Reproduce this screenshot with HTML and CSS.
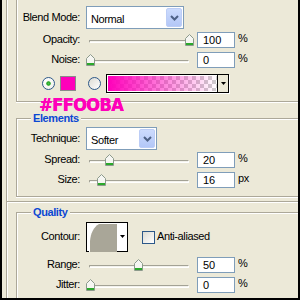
FILE: index.html
```html
<!DOCTYPE html>
<html lang="en">
<head>
    <meta charset="UTF-8">
    <title>Outer Glow</title>
    <link rel="stylesheet" href="styles.css">
</head>
<body>
<div class="screen">

    <div class="outer">
        <!-- Structure -->
        <div class="group structure">
            <div class="row blend">
                <span class="lbl">Blend Mode:</span>
                <div class="select wide"><span>Normal</span><span class="btn"><svg width="9" height="6" viewBox="0 0 9 6"><path d="M1 1L4.5 4.5L8 1" fill="none" stroke="#4D6185" stroke-width="2"/></svg></span></div>
            </div>
            <div class="row">
                <span class="lbl">Opacity:</span>
                <div class="slider"><div class="track"></div><svg class="thumb" style="left:99px" width="9" height="12" viewBox="0 0 9 12"><path d="M0.5 11.5V4.5L4.5 0.5L8.5 4.5V11.5Z" fill="#F6F6F2" stroke="#8C9A8C"/><rect x="1" y="9" width="7" height="2" fill="#2BA82B"/></svg></div>
                <span class="num">100</span><span class="unit">%</span>
            </div>
            <div class="row">
                <span class="lbl">Noise:</span>
                <div class="slider"><div class="track"></div><svg class="thumb" style="left:0px" width="9" height="12" viewBox="0 0 9 12"><path d="M0.5 11.5V4.5L4.5 0.5L8.5 4.5V11.5Z" fill="#F6F6F2" stroke="#8C9A8C"/><rect x="1" y="9" width="7" height="2" fill="#2BA82B"/></svg></div>
                <span class="num">0</span><span class="unit">%</span>
            </div>
            <div class="row colors">
                <span class="radio on"></span>
                <span class="swatch"></span>
                <span class="radio second"></span>
                <div class="grad">
                    <span class="grad-fill"></span>
                    <span class="grad-btn"><svg width="5" height="3" viewBox="0 0 5 3"><path d="M0 0H5L2.5 3Z" fill="#000"/></svg></span>
                </div>
            </div>
        </div>

        <!-- Elements -->
        <div class="group titled elements">
            <div class="legend">Elements</div>
            <div class="row blend">
                <span class="lbl">Technique:</span>
                <div class="select narrow"><span>Softer</span><span class="btn"><svg width="9" height="6" viewBox="0 0 9 6"><path d="M1 1L4.5 4.5L8 1" fill="none" stroke="#4D6185" stroke-width="2"/></svg></span></div>
            </div>
            <div class="row">
                <span class="lbl">Spread:</span>
                <div class="slider"><div class="track"></div><svg class="thumb" style="left:19px" width="9" height="12" viewBox="0 0 9 12"><path d="M0.5 11.5V4.5L4.5 0.5L8.5 4.5V11.5Z" fill="#F6F6F2" stroke="#8C9A8C"/><rect x="1" y="9" width="7" height="2" fill="#2BA82B"/></svg></div>
                <span class="num">20</span><span class="unit">%</span>
            </div>
            <div class="row">
                <span class="lbl">Size:</span>
                <div class="slider"><div class="track"></div><svg class="thumb" style="left:11px" width="9" height="12" viewBox="0 0 9 12"><path d="M0.5 11.5V4.5L4.5 0.5L8.5 4.5V11.5Z" fill="#F6F6F2" stroke="#8C9A8C"/><rect x="1" y="9" width="7" height="2" fill="#2BA82B"/></svg></div>
                <span class="num">16</span><span class="unit">px</span>
            </div>
        </div>
    </div>

    <div class="outer last">
        <!-- Quality -->
        <div class="group titled quality">
            <div class="legend">Quality</div>
            <div class="row contour-row">
                <span class="lbl">Contour:</span>
                <div class="contour">
                    <svg width="28" height="28" viewBox="0 0 28 28"><rect width="28" height="28" fill="#fff"/><path d="M1 28V17C1.5 10 4.5 3 10 0H28V28Z" fill="#A9A698"/></svg>
                    <span class="contour-btn"><svg width="5" height="3" viewBox="0 0 5 3"><path d="M0 0H5L2.5 3Z" fill="#000"/></svg></span>
                </div>
                <span class="check"></span>
                <span class="check-lbl">Anti-aliased</span>
            </div>
            <div class="row">
                <span class="lbl">Range:</span>
                <div class="slider"><div class="track"></div><svg class="thumb" style="left:48px" width="9" height="12" viewBox="0 0 9 12"><path d="M0.5 11.5V4.5L4.5 0.5L8.5 4.5V11.5Z" fill="#F6F6F2" stroke="#8C9A8C"/><rect x="1" y="9" width="7" height="2" fill="#2BA82B"/></svg></div>
                <span class="num">50</span><span class="unit">%</span>
            </div>
            <div class="row">
                <span class="lbl">Jitter:</span>
                <div class="slider"><div class="track"></div><svg class="thumb" style="left:0px" width="9" height="12" viewBox="0 0 9 12"><path d="M0.5 11.5V4.5L4.5 0.5L8.5 4.5V11.5Z" fill="#F6F6F2" stroke="#8C9A8C"/><rect x="1" y="9" width="7" height="2" fill="#2BA82B"/></svg></div>
                <span class="num">0</span><span class="unit">%</span>
            </div>
        </div>
    </div>

    <div class="hex">#FFOOBA</div>
</div>
</body>
</html>
```

FILE: styles.css
```css
body {
    margin: 0;
    width: 300px;
    height: 300px;
    overflow: hidden;
    background-color: #ECE9D8;
    font-family: "Liberation Sans", Arial, sans-serif;
    font-size: 11px;
    letter-spacing: -0.4px;
    color: #000;
}
.screen {
    position: relative;
    display: flex;
    flex-direction: column;
    height: 300px;
    box-sizing: border-box;
    border: 2px solid #000;
    border-top: none;
    overflow: hidden;
}
.outer {
    margin-left: 4px;
    padding-bottom: 4px;
    border-left: 1px solid #ACA899;
    border-bottom: 1px solid #ACA899;
    box-shadow: inset 1px 0 0 #fff, 0 1px 0 #fff;
}
.outer.last {
    flex: 1;
    display: flex;
    flex-direction: column;
    padding-bottom: 0;
    border-bottom: none;
    box-shadow: inset 1px 0 0 #fff;
}
.group {
    margin-left: 9px;
    border-left: 1px solid #ACA899;
    border-bottom: 1px solid #ACA899;
    box-shadow: inset 1px 0 0 #fff, 0 1px 0 #fff;
}
.group.titled {
    border-top: 1px solid #ACA899;
    box-shadow: inset 1px 1px 0 #fff, 0 1px 0 #fff;
}
.structure {
    padding-top: 6px;
    padding-bottom: 7px;
}
.elements {
    margin-top: 16px;
    padding-bottom: 6px;
}
.quality {
    flex: 1;
    margin-top: 10px;
    border-bottom: none;
    box-shadow: inset 1px 1px 0 #fff;
}
.legend {
    width: fit-content;
    margin: -7px 0 1px 14px;
    padding: 0 2px;
    line-height: 12px;
    background-color: #ECE9D8;
    color: #0B47D3;
    font-weight: bold;
}
.row {
    display: flex;
    align-items: center;
    height: 20px;
}
.row.blend {
    height: 23px;
    margin-bottom: 1px;
}
.elements .row.blend {
    margin-top: 3px;
    margin-bottom: 0;
}
.lbl {
    flex: none;
    width: 63px;
    margin-right: 6px;
    padding-bottom: 2px;
    text-align: right;
}
.select {
    flex: none;
    display: flex;
    align-items: center;
    justify-content: space-between;
    height: 23px;
    box-sizing: border-box;
    padding: 1px;
    border: 1px solid #7F9DB9;
    background-color: #fff;
}
.select.wide {
    width: 98px;
}
.select.narrow {
    width: 71px;
}
.select span:first-child {
    padding: 2px 0 0 3px;
}
.btn {
    display: flex;
    align-items: center;
    justify-content: center;
    width: 16px;
    height: 19px;
    box-sizing: border-box;
    border: 1px solid #BCCDF6;
    border-radius: 2px;
    background: linear-gradient(#CCDBFD, #B3C7F7);
}
.slider {
    position: relative;
    flex: none;
    width: 106px;
    height: 20px;
    margin-right: 5px;
    padding-top: 10px;
    box-sizing: border-box;
}
.track {
    height: 1px;
    margin: 0 3px;
    border: 1px solid;
    border-color: #A3A295 #fff #fff #A3A295;
    border-radius: 1px;
    background-color: #F3F2EC;
}
.thumb {
    position: absolute;
    top: 4px;
}
.num {
    flex: none;
    width: 38px;
    height: 16px;
    box-sizing: border-box;
    padding-left: 5px;
    border: 1px solid #7F9DB9;
    background-color: #fff;
    line-height: 14px;
    letter-spacing: 0;
}
.unit {
    align-self: flex-start;
    margin: 2px 0 0 3px;
    line-height: 13px;
}
.row.colors {
    height: 21px;
    margin-top: 3px;
}
.radio {
    width: 13px;
    height: 13px;
    box-sizing: border-box;
    margin-left: 25px;
    border: 1px solid #2C5889;
    border-radius: 50%;
    background: linear-gradient(135deg, #DCDBD3, #fff);
}
.radio.on {
    background: radial-gradient(circle, #4CC24C 0, #21A121 1.8px, transparent 2.6px), linear-gradient(135deg, #fff, #F2F1EA);
}
.radio.second {
    margin-left: 12px;
}
.swatch {
    width: 16px;
    height: 15px;
    box-sizing: border-box;
    margin-left: 5px;
    border: 1px solid #8A8A8A;
    background-color: #FF00BA;
}
.grad {
    display: flex;
    width: 123px;
    height: 19px;
    box-sizing: border-box;
    margin-left: 5px;
    border: 1px solid #000;
    box-shadow: 1px 1px 0 #fff;
}
.grad-fill {
    flex: 1;
    border: 1px solid #fff;
    border-right: none;
    background:
        linear-gradient(90deg, #FF00BA, rgba(255, 0, 186, 0)),
        conic-gradient(#CDCDCD 25%, #fff 0 50%, #CDCDCD 0 75%, #fff 0) 0 0 / 8px 8px;
}
.grad-btn {
    display: flex;
    align-items: center;
    justify-content: center;
    width: 10px;
    border-left: 1px solid #000;
    background-color: #ECE9D8;
}
.row.contour-row {
    height: 30px;
    margin-top: 4px;
    margin-bottom: 3px;
}
.contour {
    display: flex;
    width: 42px;
    height: 30px;
    box-sizing: border-box;
    padding: 1px 0 0 2px;
    border: 1px solid #000;
    background-color: #fff;
}
.contour-btn {
    display: flex;
    align-items: center;
    justify-content: center;
    flex: 1;
    padding-bottom: 2px;
}
.check {
    width: 13px;
    height: 13px;
    box-sizing: border-box;
    margin-left: 14px;
    border: 1px solid #2C5889;
    background: linear-gradient(135deg, #DCDBD3, #fff);
}
.check-lbl {
    margin-left: 2px;
    padding-bottom: 2px;
}
.hex {
    position: absolute;
    left: 37px;
    top: 98px;
    font-family: "Liberation Sans Narrow", "DejaVu Sans Condensed", sans-serif;
    font-size: 18px;
    font-weight: bold;
    line-height: 14px;
    letter-spacing: -0.6px;
    color: #FF00BA;
    text-shadow: 0.5px 0 0 #FF00BA;
}
```
